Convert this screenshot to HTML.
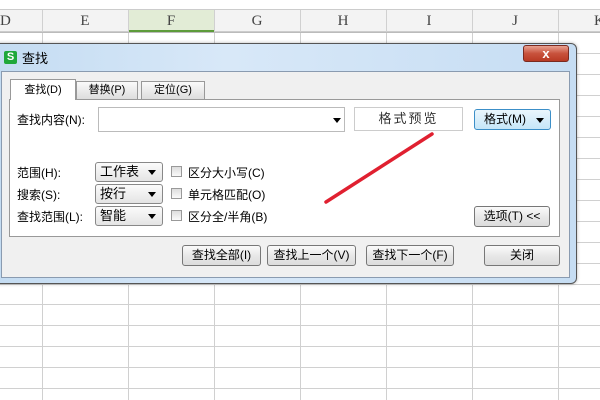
<!DOCTYPE html><html><head><meta charset="utf-8"><style>
*{margin:0;padding:0;box-sizing:border-box}
body{width:600px;height:400px;overflow:hidden;background:#fff;position:relative;font-family:"Liberation Sans","Noto Sans CJK SC",sans-serif;font-size:12px;color:#000}
.a{position:absolute}
.vl{position:absolute;width:1px;background:#d0d0d0;top:10px;height:390px}
.hl{position:absolute;height:1px;background:#d0d0d0;left:0;width:600px}
.ch{position:absolute;top:10px;height:22px;line-height:22px;text-align:center;font-family:"Liberation Serif",serif;font-size:15px;color:#444}
.btn{position:absolute;border:1px solid #777;border-radius:3px;background:linear-gradient(#fafafa,#e8e8e8 50%,#dcdcdc);text-align:center;line-height:19px;font-size:12px}
.dd{position:absolute;left:95px;width:68px;height:20px;border:1px solid #888;border-radius:3px;background:linear-gradient(#fbfbfb,#e4e4e4);font-size:13px;line-height:18px;padding-left:4px}
.dd:after{content:"";position:absolute;right:6px;top:7px;border:4px solid transparent;border-top:5px solid #000}
.cb{position:absolute;left:171px;width:11px;height:11px;border:1px solid #999;background:linear-gradient(#ddd,#fafafa)}
.lb{position:absolute;font-size:12px}
</style></head><body>
<div class="a" style="left:0;top:10px;width:600px;height:22px;background:#f3f3f3;border-bottom:1px solid #ccc"></div>
<div class="a" style="left:129px;top:10px;width:85px;height:22px;background:#e2ecd6;border-bottom:2px solid #5d9b3a"></div>
<div class="hl" style="top:9px;background:#ccc"></div>
<div class="vl" style="left:42px"></div><div class="vl" style="left:128px"></div><div class="vl" style="left:214px"></div><div class="vl" style="left:300px"></div><div class="vl" style="left:386px"></div><div class="vl" style="left:472px"></div><div class="vl" style="left:558px"></div>
<div class="hl" style="top:32px;background:#bbb"></div>
<div class="hl" style="top:53px"></div><div class="hl" style="top:74px"></div><div class="hl" style="top:95px"></div><div class="hl" style="top:116px"></div><div class="hl" style="top:137px"></div><div class="hl" style="top:158px"></div><div class="hl" style="top:179px"></div><div class="hl" style="top:200px"></div><div class="hl" style="top:221px"></div><div class="hl" style="top:242px"></div><div class="hl" style="top:263px"></div><div class="hl" style="top:284px"></div><div class="hl" style="top:304px"></div><div class="hl" style="top:325px"></div><div class="hl" style="top:346px"></div><div class="hl" style="top:367px"></div><div class="hl" style="top:388px"></div>
<div class="ch" style="left:0;width:42px;text-align:left">D</div>
<div class="ch" style="left:42px;width:86px">E</div><div class="ch" style="left:128px;width:86px">F</div><div class="ch" style="left:214px;width:86px">G</div><div class="ch" style="left:300px;width:86px">H</div><div class="ch" style="left:386px;width:86px">I</div><div class="ch" style="left:472px;width:86px">J</div><div class="ch" style="left:558px;width:86px;text-align:left;padding-left:36px">K</div>
<!-- dialog -->
<div class="a" style="left:-6px;top:43px;width:583px;height:241px;border:1px solid #555;border-radius:6px;background:linear-gradient(90deg,#c4dcf2,#d8e8f8 40%,#c6ddf3);box-shadow:0 0 3px rgba(0,0,0,.3)"></div>
<div class="a" style="left:4px;top:51px;width:13px;height:13px;background:#1fa83a;border-radius:2px;color:#fff;font-size:11px;line-height:13px;text-align:center;font-weight:bold">S</div>
<div class="a" style="left:22px;top:48px;font-size:13px">查找</div>
<div class="a" style="left:523px;top:45px;width:46px;height:17px;border:1px solid #7a2a20;border-radius:3px;background:linear-gradient(#e9a191,#c8523c 50%,#b83a24);color:#fff;text-align:center;font-weight:bold;font-size:13px;line-height:15px">x</div>
<div class="a" style="left:1px;top:71px;width:569px;height:207px;background:#f0f0f0;border:1px solid #8a9bb0"></div>
<div class="a" style="left:9px;top:99px;width:551px;height:138px;background:#fff;border:1px solid #999"></div>
<div class="a" style="left:76px;top:81px;width:62px;height:18px;border:1px solid #999;border-bottom:none;background:linear-gradient(#fafafa,#ddd);text-align:center;line-height:17px;font-size:11px">替换(P)</div>
<div class="a" style="left:141px;top:81px;width:64px;height:18px;border:1px solid #999;border-bottom:none;background:linear-gradient(#fafafa,#ddd);text-align:center;line-height:17px;font-size:11px">定位(G)</div>
<div class="a" style="left:10px;top:79px;width:66px;height:21px;border:1px solid #999;border-bottom:none;background:#fff;text-align:center;line-height:20px;font-size:11px">查找(D)</div>
<div class="lb" style="left:17px;top:111px">查找内容(N):</div>
<div class="a" style="left:98px;top:107px;width:247px;height:25px;border:1px solid #bbb;background:#fff"></div>
<div class="a" style="left:333px;top:118px;border:4px solid transparent;border-top:5px solid #000"></div>
<div class="a" style="left:354px;top:107px;width:109px;height:24px;border:1px solid #ccc;background:#fff;text-align:center;line-height:22px;font-size:13px;letter-spacing:2px;color:#333">格式预览</div>
<div class="btn" style="left:474px;top:109px;width:77px;height:21px;border-color:#3c8fc8;background:linear-gradient(#eaf6fd,#c6e6f8);text-align:left;padding-left:9px">格式(M)<span style="position:absolute;right:6px;top:8px;border:4px solid transparent;border-top:5px solid #000"></span></div>
<svg class="a" style="left:0;top:0" width="600" height="400"><line x1="432" y1="134" x2="326" y2="202" stroke="#e02030" stroke-width="3.5" stroke-linecap="round"/></svg>
<div class="lb" style="left:17px;top:164px">范围(H):</div>
<div class="lb" style="left:17px;top:186px">搜索(S):</div>
<div class="lb" style="left:17px;top:208px">查找范围(L):</div>
<div class="dd" style="top:162px">工作表</div>
<div class="dd" style="top:184px">按行</div>
<div class="dd" style="top:206px">智能</div>
<div class="cb" style="top:166px"></div><div class="cb" style="top:188px"></div><div class="cb" style="top:210px"></div>
<div class="lb" style="left:188px;top:164px">区分大小写(C)</div>
<div class="lb" style="left:188px;top:186px">单元格匹配(O)</div>
<div class="lb" style="left:188px;top:208px">区分全/半角(B)</div>
<div class="btn" style="left:474px;top:206px;width:76px;height:21px">选项(T) &lt;&lt;</div>
<div class="btn" style="left:182px;top:245px;width:79px;height:21px">查找全部(I)</div>
<div class="btn" style="left:267px;top:245px;width:89px;height:21px">查找上一个(V)</div>
<div class="btn" style="left:366px;top:245px;width:88px;height:21px">查找下一个(F)</div>
<div class="btn" style="left:484px;top:245px;width:76px;height:21px">关闭</div>
</body></html>
